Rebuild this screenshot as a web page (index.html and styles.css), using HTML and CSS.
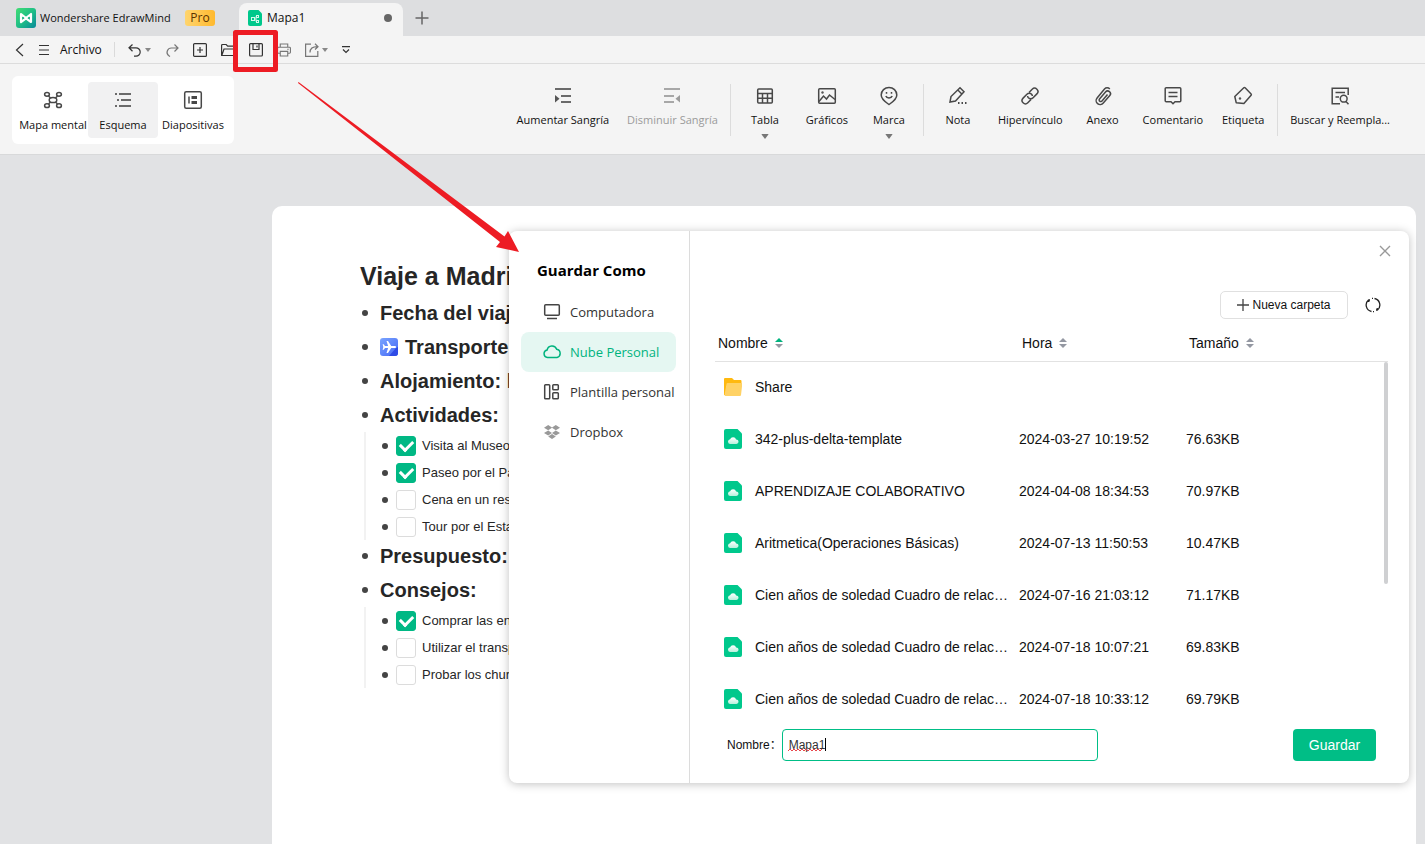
FILE: index.html
```html
<!DOCTYPE html>
<html lang="es">
<head>
<meta charset="utf-8">
<title>Wondershare EdrawMind</title>
<link rel="stylesheet" href="styles.css">
</head>
<body>
<svg class="defs" aria-hidden="true">
  <defs>
    <linearGradient id="g-logo" x1="0" y1="0" x2="1" y2="1"><stop offset="0" stop-color="#41dd74"/><stop offset=".5" stop-color="#1fbf86"/><stop offset="1" stop-color="#08889a"/></linearGradient>
    <linearGradient id="g-plane" x1="0" y1="0" x2="1" y2="1"><stop offset="0" stop-color="#7aa5ff"/><stop offset="1" stop-color="#4668f5"/></linearGradient>
    <linearGradient id="g-cloud" x1="0" y1="0" x2="0" y2="1"><stop offset="0" stop-color="#fff"/><stop offset="1" stop-color="#b8f0dd"/></linearGradient>
    <symbol id="i-file" viewBox="0 0 18 20"><path d="M2 0h11.500L18 4.500V18a2 2 0 0 1-2 2H2a2 2 0 0 1-2-2V2a2 2 0 0 1 2-2z" fill="#00c88c"/><path d="M6 15h6.300a2.200 2.200 0 0 0 1.400-3.900 2.200 2.200 0 0 0-1.600-.5 3.200 3.200 0 0 0-6-.3A2.500 2.500 0 0 0 4 12.600 2.300 2.300 0 0 0 6 15z" fill="url(#g-cloud)"/></symbol>
    <symbol id="i-sort" viewBox="0 0 8 10"><path class="up" d="M4 0l4 4H0z"/><path class="down" d="M4 10l4-4H0z"/></symbol>
    <symbol id="i-caret" viewBox="0 0 6 4"><path d="M0 0h6L3 4z" fill="currentColor"/></symbol>
  </defs>
</svg>

<header class="titlebar">
  <svg class="logo" viewBox="0 0 20 20"><rect width="20" height="20" rx="3" fill="url(#g-logo)"/><path d="M5 14V6l5 4.200L15 6v8l-5-3.700z" fill="none" stroke="#fff" stroke-width="2.200" stroke-linejoin="round"/><path d="M6.500 8.500v3l2-1.400zM13.500 8.500v3l-2-1.400z" fill="#25b486"/></svg>
  <span class="app-name">Wondershare EdrawMind</span>
  <span class="pro">Pro</span>
  <div class="tab">
    <svg width="14" height="16" viewBox="0 0 14 16"><path d="M2 0h8.500L14 3.500V14a2 2 0 0 1-2 2H2a2 2 0 0 1-2-2V2a2 2 0 0 1 2-2z" fill="#00c88c"/><g fill="none" stroke="#d5f8ec"><rect x="3.500" y="7.500" width="3" height="3"/><rect x="8.500" y="5.500" width="2" height="2"/><rect x="8.500" y="10.500" width="2" height="2"/><path d="M6.500 9h1M8 11.500V6.500"/></g></svg>
    <span class="tab-name">Mapa1</span>
    <span class="unsaved"></span>
  </div>
  <button class="plain new-tab" aria-label="Nueva pestaña"><svg width="14" height="14" viewBox="0 0 14 14"><path d="M7 .5v13M.5 7h13" stroke="#666" stroke-width="1.500"/></svg></button>
</header>

<nav class="quickbar">
  <button class="plain back" aria-label="Atrás"><svg width="9" height="14" viewBox="0 0 9 14"><path d="M8 1L1.500 7 8 13"/></svg></button>
  <button class="plain archivo"><svg width="12" height="12" viewBox="0 0 12 12"><path d="M1 1.500h10M1 6h10M1 10.500h10"/></svg><span>Archivo</span></button>
  <span class="rule"></span>
  <div class="quick-icons">
    <button class="plain" aria-label="Deshacer"><svg width="14" height="14" viewBox="0 0 14 14"><path d="M4.500 1.500L1 4.800l3.500 3.400M1 4.800h7a4.200 4.200 0 0 1 0 8.400H6"/></svg><svg class="caret" width="6" height="4"><use href="#i-caret"/></svg></button>
    <button class="plain dim" aria-label="Rehacer"><svg width="14" height="14" viewBox="0 0 14 14"><path d="M9.500 1.500L13 5 9.500 8.500M13 5H6.500a4.300 4.300 0 0 0-3 7.500l1.500 1"/></svg></button>
    <button class="plain" aria-label="Nuevo"><svg width="14" height="14" viewBox="0 0 14 14"><rect x=".6" y=".6" width="12.800" height="12.800" rx="1"/><path d="M7 4v6M4 7h6"/></svg></button>
    <button class="plain" aria-label="Abrir"><svg width="14" height="14" viewBox="0 0 14 14"><path d="M.6 12.500v-10a1 1 0 0 1 1-1h3.600l1.500 1.700h5.300a1 1 0 0 1 1 1V6M.8 12.500L3 6h11l-1.500 6.500z"/></svg></button>
    <button class="plain" aria-label="Guardar"><svg width="14" height="14" viewBox="0 0 14 14"><rect x=".6" y=".6" width="12.800" height="12.400" rx="1"/><path d="M4 .6v5.900h6V.6M8 2.500v2"/></svg></button>
    <button class="plain dim" aria-label="Imprimir"><svg width="14" height="14" viewBox="0 0 15 14"><path d="M3.500 4V.6h8V4M3.500 10.500H1.600a1 1 0 0 1-1-1V5a1 1 0 0 1 1-1h11.800a1 1 0 0 1 1 1v4.500a1 1 0 0 1-1 1h-1.900M3.500 8.500h8v4.900h-8zM11 6.200h1.500"/></svg></button>
    <button class="plain dim" aria-label="Compartir"><svg width="14" height="14" viewBox="0 0 14 14"><path d="M6 1.100H.6v12.300h12.200V8M5 9.500C5 5.500 7.500 3.700 12.500 3.700M10 .8l3 2.900-3 2.800"/></svg><svg class="caret" width="6" height="4"><use href="#i-caret"/></svg></button>
    <button class="plain" aria-label="Más"><svg width="8" height="8" viewBox="0 0 8 8"><path d="M0 .7h8M1 3.500l3 3 3-3"/></svg></button>
  </div>
</nav>

<section class="ribbon">
  <div class="modes">
    <button class="mode"><svg viewBox="0 0 20 20"><ellipse cx="10" cy="10" rx="3.800" ry="2.600"/><ellipse cx="4" cy="4.300" rx="2.400" ry="1.900"/><ellipse cx="16" cy="4.300" rx="2.400" ry="1.900"/><ellipse cx="4" cy="15.700" rx="2.400" ry="1.900"/><ellipse cx="16" cy="15.700" rx="2.400" ry="1.900"/><path d="M5.500 6l2 2M14.500 6l-2 2M5.500 14l2-2M14.500 14l-2-2"/></svg><span>Mapa mental</span></button>
    <button class="mode active"><svg viewBox="0 0 20 20" class="bars"><path d="M2 4h2M6 4h12M4 10h2M8 10h10M2 16h2M6 16h12"/></svg><span>Esquema</span></button>
    <button class="mode"><svg viewBox="0 0 20 20"><rect x="1.700" y="1.700" width="16.600" height="16.600" rx="1.500"/><path d="M6 6.500v7"/><path d="M8.500 7.500H14M8.500 12.500H14" stroke-width="3"/></svg><span>Diapositivas</span></button>
  </div>
  <div class="tools">
    <button class="tool"><svg viewBox="0 0 20 20" class="bars"><path d="M2 3h16M8 10h10M8 16h10"/><path d="M2 9v7.500l4.500-3.700z" class="solid"/></svg><span>Aumentar Sangría</span></button>
    <button class="tool" disabled><svg viewBox="0 0 20 20" class="bars"><path d="M2 3h16M2 10h10M2 16h10"/><path d="M18 9v7.500l-4.500-3.700z" class="solid"/></svg><span>Disminuir Sangría</span></button>
    <span class="divider"></span>
    <button class="tool"><svg viewBox="0 0 20 20"><rect x="2.700" y="3" width="14.600" height="14" rx="1"/><path d="M2.700 7.500h14.600M2.700 12.200h14.600M7.500 7.500V17M12.500 7.500V17"/></svg><span>Tabla</span><svg class="caret" viewBox="0 0 6 4"><use href="#i-caret"/></svg></button>
    <button class="tool"><svg viewBox="0 0 20 20"><rect x="1.700" y="2.700" width="16.600" height="14.600" rx="1"/><path d="M2 15.500L6.500 10l3 3 3-4L18 13.500"/><circle cx="5.500" cy="6.500" r="1.200" class="solid"/></svg><span>Gráficos</span></button>
    <button class="tool"><svg viewBox="0 0 20 20"><path d="M10 18.500C6.500 16 2.200 13.500 2.200 9a7.800 7.600 0 0 1 15.600 0c0 4.500-4.300 7-7.800 9.500zM6.800 10c1 2.600 5.400 2.600 6.400 0M7.500 6v1.800M12.500 6v1.800"/></svg><span>Marca</span><svg class="caret" viewBox="0 0 6 4"><use href="#i-caret"/></svg></button>
    <span class="divider"></span>
    <button class="tool"><svg viewBox="0 0 20 20"><path d="M2 16l1-5.500L12 1.800l4 4L7.500 15zM9.800 4l4 4"/><path d="M10 17h1.500M13.500 17H15M17 17h1.500" stroke-width="1.800"/></svg><span>Nota</span></button>
    <button class="tool"><svg viewBox="0 0 20 20"><path d="M9 6.500l3.200-3.300a3.300 3.300 0 0 1 4.700 4.700l-3.800 3.900a3.300 3.300 0 0 1-4.700 0 3.300 3.300 0 0 1-.8-1.800M11 13.500l-3.200 3.300a3.300 3.300 0 0 1-4.700-4.700l3.800-3.900a3.300 3.300 0 0 1 4.700 0 3.300 3.300 0 0 1 .8 1.800"/></svg><span>Hipervínculo</span></button>
    <button class="tool"><svg viewBox="0 0 20 20"><path d="M14.500 8.500L9 15a1.600 1.600 0 0 1-2.500-2l6-7a2.800 2.800 0 0 1 4.300 3.600l-6.500 7.500a4 4 0 0 1-6.200-5.200L11.500 3a3.600 3.600 0 0 1 5.300 0"/></svg><span>Anexo</span></button>
    <button class="tool"><svg viewBox="0 0 20 20"><path d="M3.200 1.700h13.600a1 1 0 0 1 1 1v12a1 1 0 0 1-1 1H12l-2 2-2-2H3.200a1 1 0 0 1-1-1v-12a1 1 0 0 1 1-1zM5.500 6.500h9M5.500 10.500h9"/></svg><span>Comentario</span></button>
    <button class="tool"><svg viewBox="0 0 20 20"><path d="M1.800 10.500l9-8.700a1 1 0 0 1 1.300 0l6 6.200a1 1 0 0 1 0 1.300l-7.200 8.200-7.700-.8z" stroke-linejoin="round"/><circle cx="7" cy="12.500" r="1.200" class="solid"/></svg><span>Etiqueta</span></button>
    <span class="divider"></span>
    <button class="tool"><svg viewBox="0 0 20 20"><path d="M10 17.800H2.200V2.200h16V9M5.500 6.500H15M5.500 11H9"/><circle cx="13.700" cy="12.700" r="3.400"/><path d="M16 15.500l2.500 2.700"/></svg><span>Buscar y Reempla...</span></button>
  </div>
</section>

<main class="canvas">
  <article class="paper">
    <h1>Viaje a Madrid</h1>
    <ul class="outline">
      <li><div class="topic">Fecha del viaje</div></li>
      <li><div class="topic"><svg class="plane" viewBox="0 0 18 18"><rect width="18" height="18" rx="3" fill="url(#g-plane)"/><path d="M9 18l7-8 2-1v6a3 3 0 0 1-3 3z" fill="#2f4be6"/><path d="M16.200 9c0 .7-.8 1.100-1.800 1.100h-3.200L8 15H6.500l1.600-4.900H5L3.700 11.700H2.600L3.300 9l-.7-2.700h1.100L5 7.900h3.100L6.500 3H8l3.200 4.900h3.200c1 0 1.800.4 1.800 1.100z" fill="#fff"/></svg>Transporte</div></li>
      <li><div class="topic">Alojamiento: hotel</div></li>
      <li><div class="topic">Actividades:</div>
        <ul class="tasks">
          <li><label><input type="checkbox" checked>Visita al Museo</label></li>
          <li><label><input type="checkbox" checked>Paseo por el Parque</label></li>
          <li><label><input type="checkbox">Cena en un restaurante</label></li>
          <li><label><input type="checkbox">Tour por el Estadio</label></li>
        </ul>
      </li>
      <li><div class="topic">Presupuesto:</div></li>
      <li><div class="topic">Consejos:</div>
        <ul class="tasks">
          <li><label><input type="checkbox" checked>Comprar las entradas</label></li>
          <li><label><input type="checkbox">Utilizar el transporte</label></li>
          <li><label><input type="checkbox">Probar los churros</label></li>
        </ul>
      </li>
    </ul>
  </article>

  <section class="dialog" role="dialog" aria-labelledby="dialog-title">
    <aside class="places">
      <h2 id="dialog-title">Guardar Como</h2>
      <button class="place"><svg viewBox="0 0 18 18"><rect x="1.700" y="1.700" width="14.600" height="10.600" rx="1"/><path d="M4 15.500h10"/></svg>Computadora</button>
      <button class="place current"><svg viewBox="0 0 18 18"><path d="M4.500 14.500a3.800 3.800 0 0 1-.4-7.500 5 5 0 0 1 9.600-.7 4.200 4.200 0 0 1 .3 8.200z"/></svg>Nube Personal</button>
      <button class="place"><svg viewBox="0 0 18 18"><rect x="1.700" y="1.700" width="5" height="14" rx=".8"/><rect x="9.800" y="1.700" width="5.500" height="5" rx=".8"/><rect x="9.800" y="9.700" width="5.500" height="6" rx=".8"/></svg>Plantilla personal</button>
      <button class="place"><svg viewBox="0 0 18 18" class="dropbox"><path d="M5.200 2L1 4.700l4.200 2.600L9 4.700l3.800 2.600L17 4.700 12.800 2 9 4.500zM5.200 7.500L1 10l4.200 2.600L9 10l3.800 2.600L17 10l-4.200-2.500L9 10zM5.200 13.500L9 16l3.800-2.500L9 11z"/></svg>Dropbox</button>
    </aside>
    <div class="files">
      <div class="close-row"><button class="plain" aria-label="Cerrar"><svg width="12" height="12" viewBox="0 0 12 12"><path d="M1 1l10 10M11 1L1 11" stroke="#999" stroke-width="1.400"/></svg></button></div>
      <div class="actions">
        <button class="new-folder"><svg width="12" height="12" viewBox="0 0 12 12"><path d="M6 0v12M0 6h12" stroke="#444" stroke-width="1.300"/></svg>Nueva carpeta</button>
        <button class="plain" aria-label="Actualizar"><svg width="16" height="16" viewBox="0 0 16 16" fill="none" stroke="#222" stroke-width="1.300"><path d="M6.500 14.500A6.600 6.600 0 0 1 3.500 3M9.500 1.500a6.600 6.600 0 0 1 3 11.500M3.500 3H5M3.800 2.500V5M12.500 13H11M12.200 13.500V11M7 1.300h1M8 14.700h1"/></svg></button>
      </div>
      <div class="list">
        <table>
          <thead><tr><th class="c-name">Nombre <svg class="sort asc"><use href="#i-sort"/></svg></th><th class="c-time">Hora <svg class="sort"><use href="#i-sort"/></svg></th><th>Tamaño <svg class="sort"><use href="#i-sort"/></svg></th></tr></thead>
          <tbody>
            <tr><td><div class="name"><svg viewBox="0 0 18 18"><path d="M0 1a1 1 0 0 1 1-1h7l2 2h6.500a1 1 0 0 1 1 1v5H0z" fill="#ffb90f"/><path d="M0 3v14h2V3z" fill="#ffb90f"/><path d="M3.500 5H17.500a.8.800 0 0 1 .8 1L17 17a1 1 0 0 1-1 .9H1.500A1 1 0 0 1 .5 17L2.500 6a1 1 0 0 1 1-1z" fill="#ffd265"/></svg><span>Share</span></div></td><td></td><td></td></tr>
            <tr><td><div class="name"><svg><use href="#i-file"/></svg><span>342-plus-delta-template</span></div></td><td>2024-03-27 10:19:52</td><td>76.63KB</td></tr>
            <tr><td><div class="name"><svg><use href="#i-file"/></svg><span>APRENDIZAJE COLABORATIVO</span></div></td><td>2024-04-08 18:34:53</td><td>70.97KB</td></tr>
            <tr><td><div class="name"><svg><use href="#i-file"/></svg><span>Aritmetica(Operaciones Básicas)</span></div></td><td>2024-07-13 11:50:53</td><td>10.47KB</td></tr>
            <tr><td><div class="name"><svg><use href="#i-file"/></svg><span>Cien años de soledad Cuadro de relac…</span></div></td><td>2024-07-16 21:03:12</td><td>71.17KB</td></tr>
            <tr><td><div class="name"><svg><use href="#i-file"/></svg><span>Cien años de soledad Cuadro de relac…</span></div></td><td>2024-07-18 10:07:21</td><td>69.83KB</td></tr>
            <tr><td><div class="name"><svg><use href="#i-file"/></svg><span>Cien años de soledad Cuadro de relac…</span></div></td><td>2024-07-18 10:33:12</td><td>69.79KB</td></tr>
          </tbody>
        </table>
        <span class="thumb"></span>
      </div>
      <div class="save-row">
        <label for="file-name">Nombre：</label>
        <div class="field"><input id="file-name" type="text" value="Mapa1" spellcheck="false"><svg class="squiggle" width="38" height="16" viewBox="0 0 38 16" fill="none"><path d="M0 14l2-2 2 2 2-2 2 2 2-2 2 2 2-2 2 2 2-2 2 2 2-2 2 2 2-2 2 2 2-2 2 2 2-2" stroke="#e8474c"/><path d="M37.500 1v13" stroke="#000"/></svg></div>
        <button class="save">Guardar</button>
      </div>
    </div>
  </section>
</main>

<svg class="callout" width="525" height="256" viewBox="0 0 525 256" aria-hidden="true"><rect x="235.500" y="32.500" width="40" height="37" fill="none" stroke="#ed1c24" stroke-width="5" stroke-linejoin="round"/><path d="M298.500 82l206 154.500 3.500-5.500 11 21-23-5 4-5L298 83z" fill="#ed1c24"/></svg>
</body>
</html>
```
FILE: styles.css
```css
* { box-sizing: border-box; }
body {
  margin: 0;
  position: relative;
  min-height: 100vh;
  display: flex;
  flex-direction: column;
  background: #e1e2e4;
  color: #111;
  font: 12px/16px "Open Sans", "Noto Sans", sans-serif;
}
button, input { font: inherit; color: inherit; }
button { border: 0; background: none; padding: 0; }
svg { flex: none; }
.defs { position: absolute; width: 0; height: 0; }
.plain { display: flex; align-items: center; }

.titlebar {
  display: flex;
  align-items: center;
  height: 36px;
  padding-left: 16px;
  background: #dddee0;
  font-size: 12px;
}
.logo { width: 20px; height: 20px; margin-right: 4px; }
.app-name { width: 145px; font-size: 11px; white-space: nowrap; }
.pro {
  width: 30px;
  border-radius: 3px;
  background: linear-gradient(90deg, #ffd56e, #ffb92e);
  color: #5a3200;
  text-align: center;
}
.tab {
  align-self: flex-end;
  display: flex;
  align-items: center;
  gap: 5px;
  width: 164px;
  height: 33px;
  margin-left: 24px;
  padding: 0 11px 3px 9px;
  border-radius: 8px 8px 0 0;
  background: #f4f4f4;
}
.tab-name { flex: 1; }
.unsaved { width: 8px; height: 8px; border-radius: 50%; background: #666; }
.new-tab { margin-left: 12px; }

.quickbar {
  display: flex;
  align-items: center;
  height: 28px;
  padding-left: 15px;
  border-bottom: 1px solid #dcdcdc;
  background: #f4f4f4;
}
.quickbar svg { fill: none; stroke: #333; stroke-width: 1.2; }
.quickbar .dim svg { stroke: #777; }
.quickbar svg.caret { margin-left: 3px; stroke: none; color: #888; }
.back { margin-right: 14px; }
.archivo { gap: 10px; }
.rule { width: 1px; height: 15px; margin: 0 13px 0 12px; background: #dadada; }
.quick-icons { display: flex; gap: 14px; }

.ribbon {
  display: flex;
  justify-content: space-between;
  align-items: flex-start;
  height: 91px;
  padding: 12px 26px 0 12px;
  border-bottom: 1px solid #d8d9da;
  background: #f4f4f4;
  font-size: 11px;
}
.ribbon svg { width: 20px; height: 20px; fill: none; stroke: #484848; stroke-width: 1.5; }
.ribbon .solid { fill: #555; stroke: none; }
.ribbon .bars { stroke: #6a6a6a; stroke-width: 2; }
.ribbon svg.caret { width: 8px; height: 5px; margin-top: 6px; stroke: none; color: #777; }
.modes { display: flex; padding: 6px; border-radius: 6px; background: #fff; }
.mode, .tool { display: flex; flex-direction: column; align-items: center; white-space: nowrap; }
.mode { width: 70px; height: 56px; padding-top: 8px; gap: 7px; border-radius: 4px; }
.mode.active { background: #f1f1f2; }
.tools { display: flex; padding-top: 10px; }
.tool { min-width: 62px; padding: 0 9px; }
.tool span { margin-top: 6px; }
.tool:disabled { color: #9b9b9b; }
.tool:disabled svg { opacity: .55; }
.divider { width: 1px; height: 52px; margin: -2px 3px 0; background: #dcdcdc; }

.canvas { flex: 1; display: flex; position: relative; padding: 51px 9px 0 272px; }
.paper {
  flex: 1;
  padding: 53px 88px 0;
  border-radius: 10px 10px 0 0;
  background: #fff;
  color: #262626;
  font-family: "Liberation Sans", Arial, sans-serif;
}
h1 { margin: 0 0 3px; font-size: 25px; line-height: 34px; }
.outline, .tasks { margin: 0; padding: 0; list-style: none; }
.outline { padding-left: 2px; }
.topic { display: flex; align-items: center; height: 34px; font-size: 20px; font-weight: 700; }
.topic::before, .tasks label::before {
  content: "";
  width: 6px;
  height: 6px;
  margin-right: 12px;
  border-radius: 50%;
  background: #444;
}
.plane { width: 18px; height: 18px; margin-right: 7px; }
.tasks { margin: 0 0 -1px 2px; padding-left: 16px; border-left: 2px solid #f2f2f2; }
.tasks label { display: flex; align-items: center; height: 27px; font-size: 13px; }
.tasks label::before { margin-right: 8px; }
.tasks input {
  appearance: none;
  width: 20px;
  height: 20px;
  margin: 0 6px 0 0;
  border: 1px solid #dcdcdc;
  border-radius: 3px;
  display: grid;
  place-content: center;
}
.tasks input:checked { border-color: #00b884; background: #00b884; }
.tasks input:checked::before {
  content: "";
  width: 10px;
  height: 6px;
  border: solid #fff;
  border-width: 0 0 3px 3px;
  transform: translateY(-1px) rotate(-45deg);
}

.dialog {
  position: absolute;
  top: 76px;
  left: 509px;
  right: 16px;
  display: flex;
  border-radius: 8px;
  background: #fff;
  box-shadow: 0 1px 10px rgba(0, 0, 0, .25);
}
.places { width: 181px; padding: 27px 13px 0 12px; border-right: 1px solid #dcdcdc; }
h2 { margin: 0 0 10px 16px; color: #000; font-size: 15px; line-height: 24px; }
.place {
  display: flex;
  align-items: center;
  gap: 9px;
  width: 100%;
  height: 40px;
  padding-left: 22px;
  border-radius: 8px;
  color: #333;
  font-size: 13px;
  white-space: nowrap;
}
.place svg { width: 18px; height: 18px; fill: none; stroke: #444; stroke-width: 1.5; }
.place .dropbox { fill: #999; stroke: none; }
.place.current { background: #e5f7f2; color: #00b37e; }
.place.current svg { stroke: #00b37e; }

.files {
  flex: 1;
  min-width: 0;
  padding: 14px 18px 22px 25px;
  color: #111;
  font-family: "Liberation Sans", Arial, "Noto Sans CJK SC", sans-serif;
}
.close-row { display: flex; justify-content: flex-end; }
.actions { display: flex; justify-content: flex-end; gap: 17px; margin: 34px 10px 0 0; }
.new-folder {
  display: flex;
  align-items: center;
  justify-content: center;
  gap: 3px;
  width: 128px;
  height: 28px;
  border: 1px solid #e0e0e0;
  border-radius: 5px;
}
.list { position: relative; margin-top: 6px; margin-right: 3px; }
table { width: 100%; border-collapse: collapse; table-layout: fixed; font-size: 14px; }
th { height: 36px; padding: 0 0 0 3px; border-bottom: 1px solid #e2e2e2; font-weight: 400; text-align: left; }
td { height: 52px; padding: 0; }
.c-name { width: 304px; }
.c-time { width: 167px; }
.sort { --up: #9498a2; width: 8px; height: 10px; margin-left: 3px; }
.sort.asc { --up: #00b37e; }
.up { fill: var(--up); }
.down { fill: #9498a2; }
.name { display: flex; align-items: center; gap: 13px; padding-left: 9px; white-space: nowrap; }
.name svg { width: 18px; height: 20px; }
.thumb { position: absolute; right: 0; top: 37px; width: 4px; height: 222px; border-radius: 2px; background: #cfd0d2; }
.save-row { display: flex; align-items: center; padding: 4px 15px 0 12px; }
.field { position: relative; width: 316px; margin-right: auto; }
.field input {
  width: 100%;
  height: 32px;
  padding: 0 6px;
  border: 1px solid #00be86;
  border-radius: 4px;
  background: #fff;
  color: #333;
}
.squiggle { position: absolute; left: 6px; top: 8px; }
.save {
  width: 83px;
  height: 32px;
  border-radius: 4px;
  background: #00be86;
  color: #fff;
  font-size: 14px;
}
.callout { position: absolute; left: 0; top: 0; pointer-events: none; }
```
